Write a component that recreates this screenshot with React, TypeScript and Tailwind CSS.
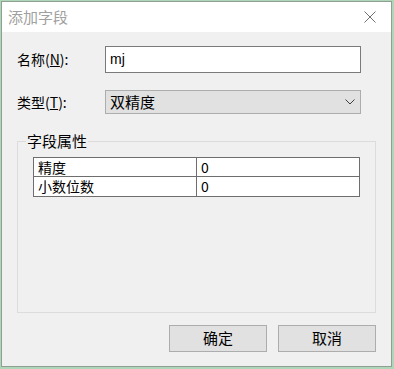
const cjk = { fontFamily: '"Noto Sans CJK SC", "Liberation Sans", sans-serif' };

const Row = ({ name, value, last }: { name: string; value: string; last?: boolean }) => (
  <div className={`flex h-[19px] ${last ? "" : "border-b border-[#6e6e6e]"}`}>
    <div className="w-[163px] border-r border-[#6e6e6e] pl-[4px] text-[14px] leading-[18px]">{name}</div>
    <div className="flex-1 pl-[4px] text-[14px] leading-[18px]">{value}</div>
  </div>
);

export default function App() {
  return (
    <div className="w-[394px] h-[369px] bg-[#aed7b8] pt-[1px] pl-[1px]" style={cjk}>
      <div className="w-[391px] h-[366px] border border-[#8f9f93] bg-[#f0f0f0] flex flex-col">
        <div className="h-[30px] bg-white flex items-center justify-between pl-[6px] pr-[15px]">
          <span className="text-[15px] text-[#a0a0a0]">添加字段</span>
          <svg width="12" height="12" viewBox="0 0 12 12" stroke="#707070" strokeWidth="1">
            <path d="M0.5 0.5 L11.5 11.5 M11.5 0.5 L0.5 11.5" />
          </svg>
        </div>
        <div className="flex-1 flex flex-col pl-[15px] text-black">
          <div className="flex items-center mt-[14px] h-[27px]">
            <span className="w-[88px] text-[14px]">
              名称(<span className="underline">N</span>):
            </span>
            <div className="w-[256px] h-[27px] bg-white border border-[#7a7a7a] pl-[4px] text-[14px] leading-[25px]" style={{ fontFamily: '"Liberation Sans", sans-serif' }}>
              mj
            </div>
          </div>
          <div className="flex items-center mt-[17px] h-[24px]">
            <span className="w-[88px] text-[14px]">
              类型(<span className="underline">T</span>):
            </span>
            <div className="w-[256px] h-[24px] bg-[#e1e1e1] border border-[#adadad] flex items-center justify-between pl-[4px] pr-[5px]">
              <span className="text-[15px]">双精度</span>
              <svg width="10" height="6" viewBox="0 0 10 6" fill="none" stroke="#404040" strokeWidth="1">
                <path d="M0.5 0.5 L5 5 L9.5 0.5" />
              </svg>
            </div>
          </div>
          <div className="relative mt-[27px] h-[172px] border border-[#dcdcdc] w-[359px]">
            <span className="absolute -top-[11px] left-[8px] bg-[#f0f0f0] px-[1px] text-[15px] leading-[20px]">字段属性</span>
            <div className="mt-[15px] ml-[15px] w-[327px] border border-[#6e6e6e] bg-white">
              <Row name="精度" value="0" />
              <Row name="小数位数" value="0" last />
            </div>
          </div>
          <div className="flex justify-end gap-[11px] mt-[12px] w-[359px]">
            <button className="w-[98px] h-[27px] bg-[#e1e1e1] border border-[#adadad] text-[15px]">确定</button>
            <button className="w-[98px] h-[27px] bg-[#e1e1e1] border border-[#adadad] text-[15px]">取消</button>
          </div>
        </div>
      </div>
    </div>
  );
}
